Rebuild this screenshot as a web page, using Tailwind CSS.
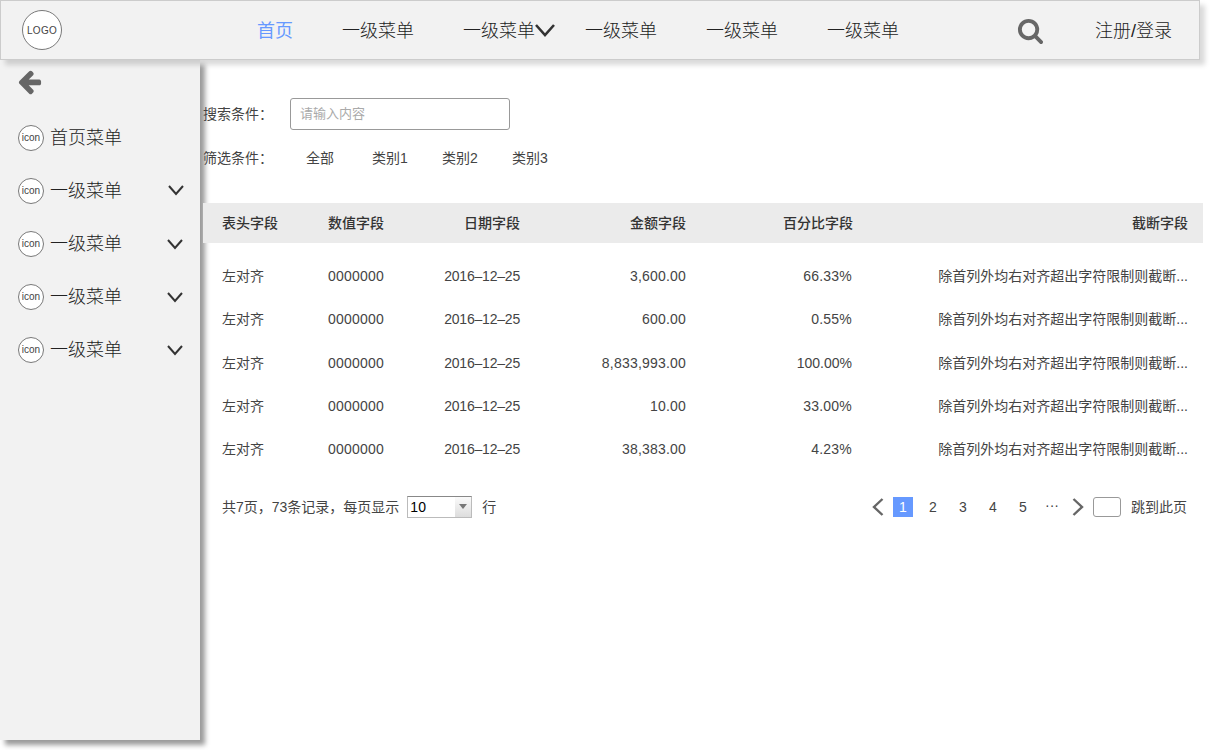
<!DOCTYPE html>
<html lang="zh-CN">
  <head>
    <meta charset="UTF-8" />
    <title>列表页</title>
    <script src="https://cdn.jsdelivr.net/npm/@tailwindcss/browser@4"></script>
  </head>
  <body class="bg-white font-['Liberation_Sans','Noto_Sans_CJK_SC',sans-serif] text-[#333]">
    <div class="w-[1210px] h-[750px] overflow-hidden">
      <!-- top nav -->
      <header class="relative z-10 w-[1200px] h-[60px] flex items-center bg-[#f2f2f2] border border-[#ccc] shadow-[5px_5px_5px_rgba(0,0,0,0.15)]">
        <div class="ml-[21px] w-10 h-10 rounded-full bg-white border border-[#797979] flex items-center justify-center text-[10px] tracking-[0.3px] text-[#444]">LOGO</div>
        <nav class="ml-[195px] pt-[2px] flex items-center gap-[49px] text-lg font-light text-[#222]">
          <a class="text-[#6699ff] font-normal">首页</a>
          <a>一级菜单</a>
          <a class="flex items-center -mr-[19px]">一级菜单
            <svg class="w-5 h-5 -translate-y-px" viewBox="0 0 20 20" fill="none" stroke="#333" stroke-width="2.6"><path d="M1 5l9 10 9-10" /></svg>
          </a>
          <a>一级菜单</a>
          <a>一级菜单</a>
          <a>一级菜单</a>
        </nav>
        <svg class="ml-[118px] w-[27px] h-[27px]" viewBox="0 0 1792 1792" fill="#666"><path d="M1216 832q0-185-131.5-316.5t-316.5-131.5-316.5 131.5-131.5 316.5 131.5 316.5 316.5 131.5 316.5-131.5 131.5-316.5zm512 832q0 52-38 90t-90 38q-54 0-90-38l-343-342q-179 124-399 124-143 0-273.5-55.5t-225-150-150-225-55.5-273.5 55.5-273.5 150-225 225-150 273.5-55.5 273.5 55.5 225 150 150 225 55.5 273.5q0 220-124 399l343 343q37 37 37 90z" /></svg>
        <a class="ml-[51px] pt-[2px] text-lg font-light text-[#222]">注册/登录</a>
      </header>

      <div class="flex">
        <!-- side menu -->
        <aside class="w-[200px] h-[680px] shrink-0 bg-[#f2f2f2] shadow-[5px_5px_5px_rgba(0,0,0,0.4)] pl-[18px] pr-4">
          <svg class="mt-[8px] w-[27px] h-[27px] -ml-[2px]" viewBox="0 0 1792 1792" fill="#666"><path d="M1664 896v128q0 53-32.5 90.5t-84.5 37.5h-704l293 294q38 36 38 90t-38 90l-75 76q-37 37-90 37-52 0-91-37l-651-652q-37-37-37-90 0-52 37-91l651-650q38-38 91-38 52 0 90 38l75 74q38 38 38 91t-38 91l-293 293h704q52 0 84.5 37.5t32.5 90.5z" /></svg>
          <ul class="mt-[30px] flex flex-col gap-[27px] text-lg font-light text-[#222]">
            <li class="h-[26px] flex items-center">
              <span class="w-[26px] h-[26px] rounded-full bg-white border border-[#797979] flex items-center justify-center text-[10px] text-[#444]">icon</span>
              <span class="ml-[6px]">首页菜单</span>
            </li>
            <li class="h-[26px] flex items-center">
              <span class="w-[26px] h-[26px] rounded-full bg-white border border-[#797979] flex items-center justify-center text-[10px] text-[#444]">icon</span>
              <span class="ml-[6px]">一级菜单</span>
              <svg class="ml-auto -translate-y-px w-4 h-4" viewBox="0 0 16 16" fill="none" stroke="#333" stroke-width="2"><path d="M1 4l7 8 7-8" /></svg>
            </li>
            <li class="h-[26px] flex items-center">
              <span class="w-[26px] h-[26px] rounded-full bg-white border border-[#797979] flex items-center justify-center text-[10px] text-[#444]">icon</span>
              <span class="ml-[6px]">一级菜单</span>
              <svg class="ml-auto mr-px w-4 h-4" viewBox="0 0 16 16" fill="none" stroke="#333" stroke-width="2"><path d="M1 4l7 8 7-8" /></svg>
            </li>
            <li class="h-[26px] flex items-center">
              <span class="w-[26px] h-[26px] rounded-full bg-white border border-[#797979] flex items-center justify-center text-[10px] text-[#444]">icon</span>
              <span class="ml-[6px]">一级菜单</span>
              <svg class="ml-auto mr-px w-4 h-4" viewBox="0 0 16 16" fill="none" stroke="#333" stroke-width="2"><path d="M1 4l7 8 7-8" /></svg>
            </li>
            <li class="h-[26px] flex items-center">
              <span class="w-[26px] h-[26px] rounded-full bg-white border border-[#797979] flex items-center justify-center text-[10px] text-[#444]">icon</span>
              <span class="ml-[6px]">一级菜单</span>
              <svg class="ml-auto mr-px w-4 h-4" viewBox="0 0 16 16" fill="none" stroke="#333" stroke-width="2"><path d="M1 4l7 8 7-8" /></svg>
            </li>
          </ul>
        </aside>

        <!-- main -->
        <main class="w-[1003px] pl-[3px] text-sm text-[#444]">
          <div class="mt-[38px] h-8 flex items-center">
            <span class="w-[87px]">搜索条件：</span>
            <div class="w-[220px] h-8 px-[9px] flex items-center bg-white border border-[#999] rounded-[3px] text-[13px] text-[#aaa]">请输入内容</div>
          </div>
          <div class="mt-[12px] h-8 flex items-center">
            <span class="w-[103px]">筛选条件：</span>
            <span class="w-[66px]">全部</span>
            <span class="w-[70px]">类别1</span>
            <span class="w-[70px]">类别2</span>
            <span>类别3</span>
          </div>

          <div class="mt-[29px] h-10 grid grid-cols-[125px_92px_100px_166px_167px_350px] items-center bg-[#ebebeb] font-medium text-[#333] [&>*:nth-child(n+3)]:text-right">
            <div class="pl-[19px]">表头字段</div>
            <div>数值字段</div>
            <div>日期字段</div>
            <div>金额字段</div>
            <div>百分比字段</div>
            <div class="pr-[15px]">截断字段</div>
          </div>

          <div class="mt-[11.2px]">
            <div class="h-[43.4px] grid grid-cols-[125px_92px_100px_166px_166px_351px] items-center [&>*:nth-child(n+3)]:text-right">
              <div class="pl-[19px]">左对齐</div>
              <div class="tracking-[0.2px]">0000000</div>
              <div class="tracking-[-0.2px]">2016–12–25</div>
              <div class="tracking-[0.2px]">3,600.00</div>
              <div class="tracking-[0.2px]">66.33%</div>
              <div class="pr-[15px]">除首列外均右对齐超出字符限制则截断...</div>
            </div>
            <div class="h-[43.4px] grid grid-cols-[125px_92px_100px_166px_166px_351px] items-center [&>*:nth-child(n+3)]:text-right">
              <div class="pl-[19px]">左对齐</div>
              <div class="tracking-[0.2px]">0000000</div>
              <div class="tracking-[-0.2px]">2016–12–25</div>
              <div class="tracking-[0.2px]">600.00</div>
              <div class="tracking-[0.2px]">0.55%</div>
              <div class="pr-[15px]">除首列外均右对齐超出字符限制则截断...</div>
            </div>
            <div class="h-[43.4px] grid grid-cols-[125px_92px_100px_166px_166px_351px] items-center [&>*:nth-child(n+3)]:text-right">
              <div class="pl-[19px]">左对齐</div>
              <div class="tracking-[0.2px]">0000000</div>
              <div class="tracking-[-0.2px]">2016–12–25</div>
              <div class="tracking-[0.2px]">8,833,993.00</div>
              <div>100.00%</div>
              <div class="pr-[15px]">除首列外均右对齐超出字符限制则截断...</div>
            </div>
            <div class="h-[43.4px] grid grid-cols-[125px_92px_100px_166px_166px_351px] items-center [&>*:nth-child(n+3)]:text-right">
              <div class="pl-[19px]">左对齐</div>
              <div class="tracking-[0.2px]">0000000</div>
              <div class="tracking-[-0.2px]">2016–12–25</div>
              <div class="tracking-[0.2px]">10.00</div>
              <div class="tracking-[0.2px]">33.00%</div>
              <div class="pr-[15px]">除首列外均右对齐超出字符限制则截断...</div>
            </div>
            <div class="h-[43.4px] grid grid-cols-[125px_92px_100px_166px_166px_351px] items-center [&>*:nth-child(n+3)]:text-right">
              <div class="pl-[19px]">左对齐</div>
              <div class="tracking-[0.2px]">0000000</div>
              <div class="tracking-[-0.2px]">2016–12–25</div>
              <div class="tracking-[0.2px]">38,383.00</div>
              <div class="tracking-[0.2px]">4.23%</div>
              <div class="pr-[15px]">除首列外均右对齐超出字符限制则截断...</div>
            </div>
          </div>

          <!-- pagination -->
          <div class="mt-[23.8px] h-[24px] flex items-center pl-[19px]">
            <span>共7页，73条记录，每页显示</span>
            <div class="ml-[8px] w-[65px] h-[22px] flex bg-white border border-[#bbb] border-t-[#888]">
              <span class="flex-1 pl-[2px] leading-[20px] text-black">10</span>
              <span class="w-[16px] flex items-center justify-center bg-gradient-to-b from-[#fafafa] to-[#ddd]">
                <span class="border-x-[4px] border-t-[5px] border-x-transparent border-t-[#777]"></span>
              </span>
            </div>
            <span class="ml-[10px]">行</span>
            <div class="ml-auto flex items-center">
              <svg class="w-3 h-[18px]" viewBox="0 0 12 18" fill="none" stroke="#666" stroke-width="2.4"><path d="M10.5 1L2 9l8.5 8" /></svg>
              <span class="ml-[9px] w-5 h-5 flex items-center justify-center bg-[#6699ff] text-white">1</span>
              <span class="ml-[10px] w-5 text-center">2</span>
              <span class="ml-[10px] w-5 text-center">3</span>
              <span class="ml-[10px] w-5 text-center">4</span>
              <span class="ml-[10px] w-5 text-center">5</span>
              <span class="ml-[9px] w-5 text-center leading-3 -translate-y-0.5">···</span>
              <svg class="ml-[10px] w-3 h-[18px]" viewBox="0 0 12 18" fill="none" stroke="#666" stroke-width="2.4"><path d="M1.5 1L10 9l-8.5 8" /></svg>
              <div class="ml-[9px] w-7 h-5 bg-white border border-[#999] rounded-[3px]"></div>
              <span class="ml-[10px] mr-4">跳到此页</span>
            </div>
          </div>
        </main>
      </div>
    </div>
  </body>
</html>
